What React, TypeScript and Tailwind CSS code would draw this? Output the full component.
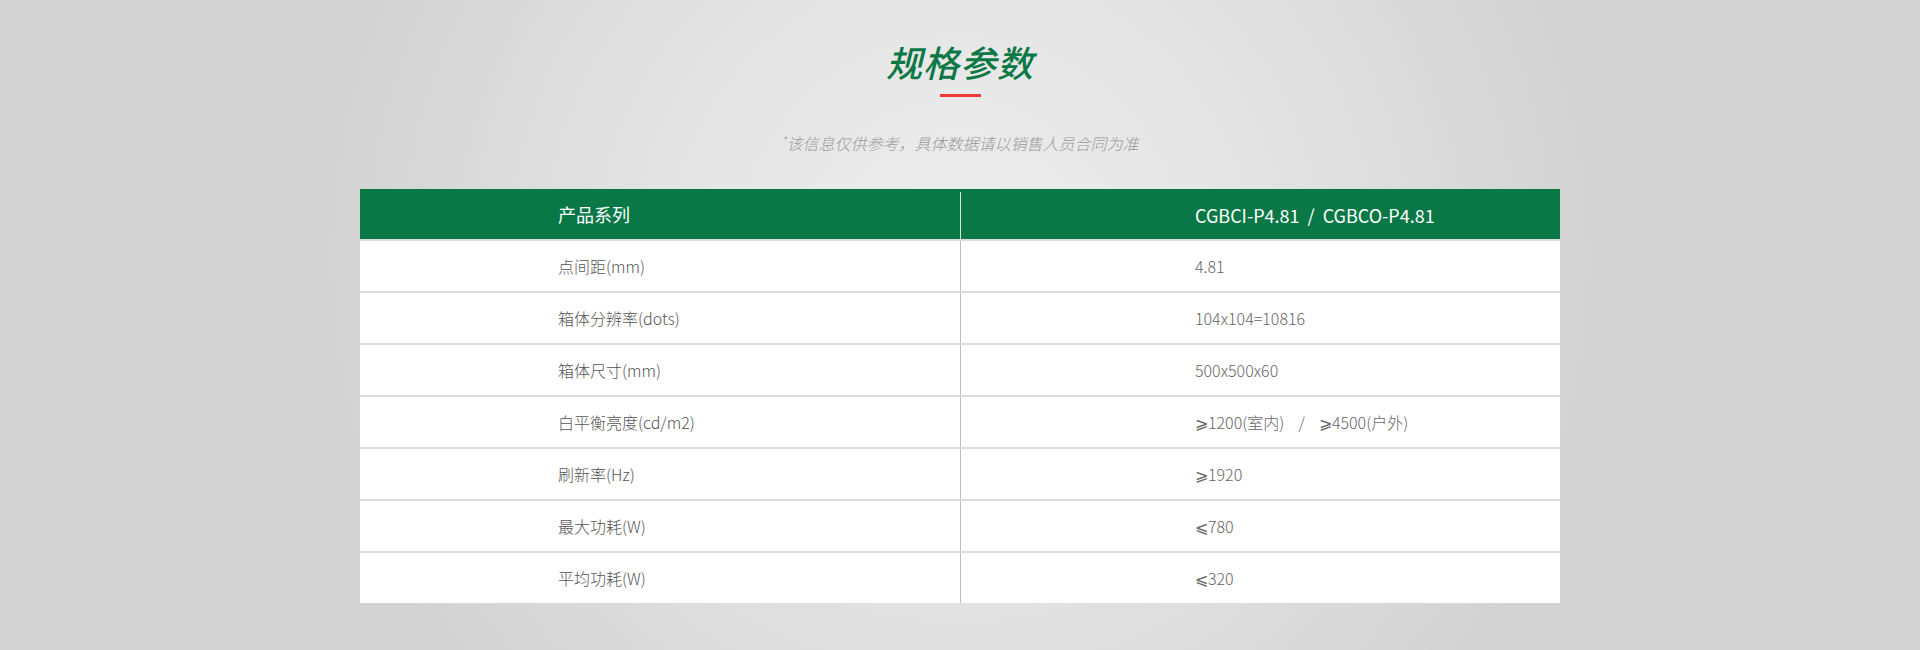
const rows: [string, string][] = [
  ['点间距(mm)', '4.81'],
  ['箱体分辨率(dots)', '104x104=10816'],
  ['箱体尺寸(mm)', '500x500x60'],
  ['白平衡亮度(cd/m2)', '⩾1200(室内)    /    ⩾4500(户外)'],
  ['刷新率(Hz)', '⩾1920'],
  ['最大功耗(W)', '⩽780'],
  ['平均功耗(W)', '⩽320'],
]

export default function App() {
  return (
    <main
      className="w-[1920px] h-[650px] bg-[radial-gradient(circle_640px_at_50%_40%,#ededed_0%,#e6e6e6_40%,#d3d3d3_100%)] flex flex-col items-center pt-[36px]"
      style={{ fontFamily: '"Noto Sans CJK SC", "Noto Sans", sans-serif' }}
    >
      <h1 className="text-[36px] leading-[50px] italic font-medium text-[#0b7845] tracking-[1px]">规格参数</h1>
      <div className="mt-[8px] w-[41px] h-[3px] bg-[#f0383a]" />
      <p className="mt-[34px] text-[16px] leading-[24px] italic font-light text-[#9a9a9a]">
        <sup className="text-[11px]">*</sup>该信息仅供参考，具体数据请以销售人员合同为准
      </p>

      <div className="mt-[34px] w-[1200px] bg-[#dcdcdc]">
        <div className="flex h-[50px] bg-[#0a7846] text-white text-[18px]">
          <div className="w-1/2 flex items-center pl-[198px]">产品系列</div>
          <div className="w-1/2 flex items-center pl-[234px] border-l border-[#d8e6de] mt-[3px] whitespace-pre">
            CGBCI-P4.81  /  CGBCO-P4.81
          </div>
        </div>
        {rows.map(([label, value]) => (
          <div key={label} className="flex h-[50px] mt-[2px] bg-white text-[16px] font-light text-[#555]">
            <div className="w-1/2 flex items-center pl-[198px]">{label}</div>
            <div className="w-1/2 flex items-center pl-[234px] border-l border-[#bdbdbd] text-[#666] whitespace-pre">
              {value}
            </div>
          </div>
        ))}
      </div>
    </main>
  )
}
